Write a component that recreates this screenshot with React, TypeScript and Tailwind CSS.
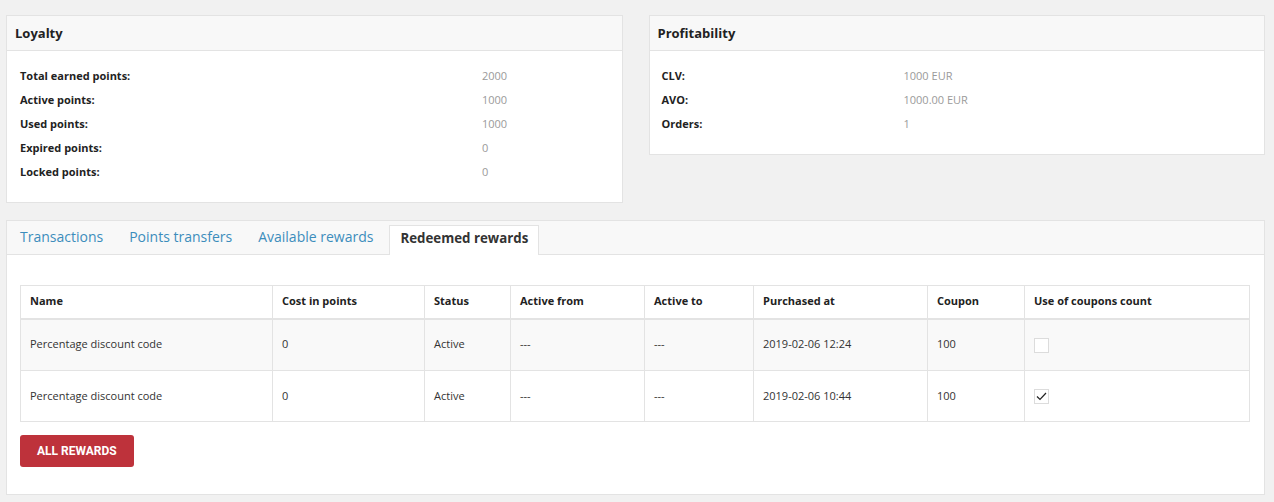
import React from 'react';

const loyalty = [
  ['Total earned points:', '2000'],
  ['Active points:', '1000'],
  ['Used points:', '1000'],
  ['Expired points:', '0'],
  ['Locked points:', '0'],
];

const profitability = [
  ['CLV:', '1000 EUR'],
  ['AVO:', '1000.00 EUR'],
  ['Orders:', '1'],
];

const columns = [
  { label: 'Name', width: 252 },
  { label: 'Cost in points', width: 152 },
  { label: 'Status', width: 86 },
  { label: 'Active from', width: 134 },
  { label: 'Active to', width: 109 },
  { label: 'Purchased at', width: 174 },
  { label: 'Coupon', width: 97 },
  { label: 'Use of coupons count', width: 225 },
];

const rewards = [
  { name: 'Percentage discount code', cost: '0', status: 'Active', from: '---', to: '---', purchased: '2019-02-06 12:24', coupon: '100', used: false },
  { name: 'Percentage discount code', cost: '0', status: 'Active', from: '---', to: '---', purchased: '2019-02-06 10:44', coupon: '100', used: true },
];

const tabs = ['Transactions', 'Points transfers', 'Available rewards'];

function Card({ title, rows, labelWidth, padX }: { title: string; rows: string[][]; labelWidth: string; padX: string }) {
  return (
    <div className="bg-white border border-[#e3e3e3] self-start">
      <div className="h-[35px] flex items-center px-2 pt-px bg-[#f8f8f8] border-b border-[#e3e3e3]">
        <h3 className="text-[13px] font-bold text-[#222]">{title}</h3>
      </div>
      <div className={`pt-[13px] pb-[18px] ${padX}`}>
        {rows.map(([label, value]) => (
          <div key={label} className="flex items-center h-6 text-[11px]">
            <span className={`font-bold text-[#222] ${labelWidth}`}>{label}</span>
            <span className="text-[#9a9a9a]">{value}</span>
          </div>
        ))}
      </div>
    </div>
  );
}

function Checkbox({ checked }: { checked: boolean }) {
  return (
    <span className="inline-flex w-[15px] h-[15px] border border-[#dcdcdc] bg-white items-center justify-center align-middle">
      {checked && (
        <svg width="11" height="9" viewBox="0 0 11 9" fill="none">
          <path d="M1 4.5 L4 7.5 L10 1" stroke="#222" strokeWidth="1.2" />
        </svg>
      )}
    </span>
  );
}

export default function App() {
  return (
    <div className="min-h-[502px] bg-[#f1f1f1] pt-[15px] pl-[6px] pr-[9px] pb-2 font-['Open_Sans',sans-serif] text-[#333]">
      <div className="grid grid-cols-2 gap-[26px]">
        <Card title="Loyalty" rows={loyalty} labelWidth="w-[462px]" padX="px-[13px]" />
        <Card title="Profitability" rows={profitability} labelWidth="w-[242px]" padX="px-3" />
      </div>

      {/* Tabs panel */}
      <div className="mt-[17px] bg-white border border-[#e3e3e3]">
        <div className="h-[34px] flex items-end bg-[#f8f8f8] border-b border-[#e3e3e3]">
          {tabs.map((tab) => (
            <span key={tab} className="h-[33px] flex items-center px-[13px] pb-[2px] text-[14px] text-[#3c8dbc]">
              {tab}
            </span>
          ))}
          <span className="ml-[3px] h-[30px] -mb-px flex items-center px-[10px] pb-[3px] bg-white border border-b-0 border-[#e3e3e3] text-[13.3px] font-bold text-[#333]">
            Redeemed rewards
          </span>
        </div>

        <div className="pt-[30px] pl-[13px] pr-[15px] pb-[27px]">
          <table className="table-fixed border-collapse w-full text-[11px]">
            <colgroup>
              {columns.map((c) => (
                <col key={c.label} style={{ width: c.width }} />
              ))}
            </colgroup>
            <thead>
              <tr className="h-[33px]">
                {columns.map((c) => (
                  <th key={c.label} className="text-left font-bold px-[9px] pb-px border border-[#e3e3e3] border-b-2 text-[#222]">
                    {c.label}
                  </th>
                ))}
              </tr>
            </thead>
            <tbody>
              {rewards.map((r, i) => (
                <tr key={r.purchased} className={`h-[51.5px] ${i === 0 ? 'bg-[#f9f9f9]' : 'bg-white'}`}>
                  <td className="px-[9px] border border-[#e3e3e3]">{r.name}</td>
                  <td className="px-[9px] border border-[#e3e3e3]">{r.cost}</td>
                  <td className="px-[9px] border border-[#e3e3e3]">{r.status}</td>
                  <td className="px-[9px] border border-[#e3e3e3]">{r.from}</td>
                  <td className="px-[9px] border border-[#e3e3e3]">{r.to}</td>
                  <td className="px-[9px] border border-[#e3e3e3]">{r.purchased}</td>
                  <td className="px-[9px] border border-[#e3e3e3]">{r.coupon}</td>
                  <td className="px-[9px] border border-[#e3e3e3]">
                    <Checkbox checked={r.used} />
                  </td>
                </tr>
              ))}
            </tbody>
          </table>

          <button className="mt-[13px] h-[32px] px-[17px] rounded-[3px] bg-[#be323b] text-white text-[12px] font-bold uppercase font-['Roboto',sans-serif]">
            All rewards
          </button>
        </div>
      </div>
    </div>
  );
}
